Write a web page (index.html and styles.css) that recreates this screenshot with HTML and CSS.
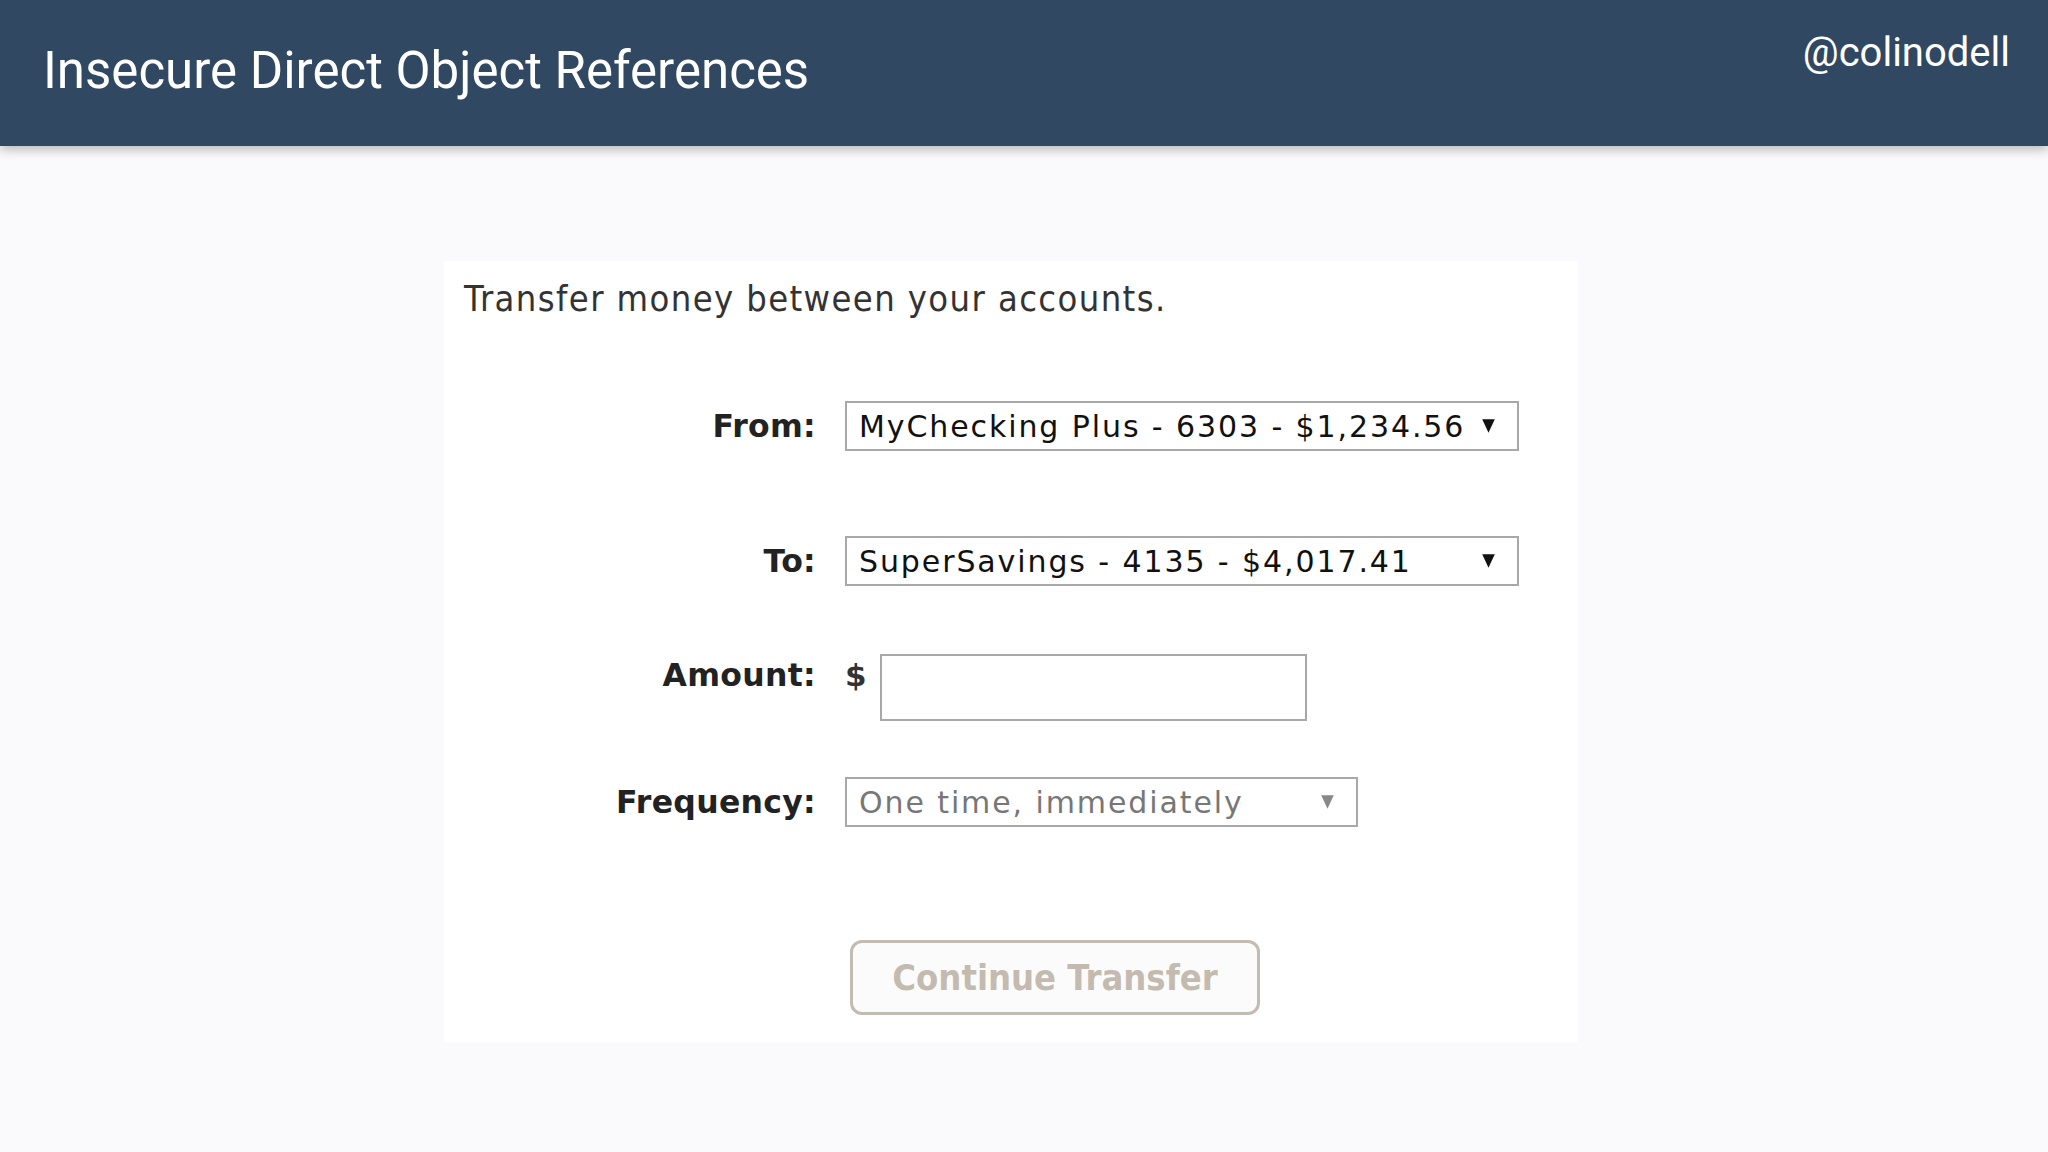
FILE: index.html
```html
<!DOCTYPE html>
<html lang="en">
<head>
  <meta charset="UTF-8">
  <title>Insecure Direct Object References</title>
  <link rel="stylesheet" href="styles.css">
</head>
<body>

  <header class="slide-header">
    <h1>Insecure Direct Object References</h1>
    <div class="handle">@colinodell</div>
  </header>

  <main class="panel">
    <p class="intro">Transfer money between your accounts.</p>

    <div class="row row-from">
      <label>From:</label>
      <div class="select select-wide">
        <span>MyChecking Plus - 6303 - $1,234.56</span>
        <svg class="caret" viewBox="0 0 12 14"><path d="M0.5 1 H11.5 L6 13 Z"/></svg>
      </div>
    </div>

    <div class="row row-to">
      <label>To:</label>
      <div class="select select-wide">
        <span>SuperSavings - 4135 - $4,017.41</span>
        <svg class="caret" viewBox="0 0 12 14"><path d="M0.5 1 H11.5 L6 13 Z"/></svg>
      </div>
    </div>

    <div class="row row-amount">
      <label>Amount:</label>
      <span class="dollar">$</span>
      <input class="amount" type="text">
    </div>

    <div class="row row-freq">
      <label>Frequency:</label>
      <div class="select select-freq">
        <span>One time, immediately</span>
        <svg class="caret" viewBox="0 0 12 14"><path d="M0.5 1 H11.5 L6 13 Z"/></svg>
      </div>
    </div>

    <div class="row row-submit">
      <label></label>
      <button class="btn" disabled>Continue Transfer</button>
    </div>
  </main>

</body>
</html>
```

FILE: styles.css
```css
body {
  margin: 0;
  background: #faf9fb;
  font-family: "DejaVu Sans Condensed", "DejaVu Sans", sans-serif;
  width: 2048px;
  height: 1152px;
  overflow: hidden;
}
.slide-header {
  height: 146px;
  background: #304862;
  box-shadow: 0 4px 10px rgba(0,0,0,0.25);
  display: flex;
  justify-content: space-between;
  align-items: flex-start;
  padding: 0 38px 0 43px;
  color: #fff;
  font-family: Roboto, sans-serif;
}
.slide-header h1 {
  margin: 0;
  padding-top: 38px;
  font-size: 51px;
  font-weight: 400;
  line-height: 66px;
}
.handle {
  padding-top: 25px;
  font-size: 40px;
  line-height: 56px;
}
.panel {
  display: block;
  width: 1094px;
  margin: 115px 0 0 444px;
  background: #fff;
  padding: 16px 20px 27px 20px;
}
.intro {
  margin: 0;
  font-size: 36px;
  line-height: 44px;
  letter-spacing: 1.4px;
  color: #333;
}
.row {
  display: flex;
  align-items: center;
}
.row label {
  width: 352px;
  margin-right: 29px;
  text-align: right;
  font-family: "DejaVu Sans", sans-serif;
  font-weight: bold;
  font-size: 31.5px;
  letter-spacing: 0.3px;
  line-height: 38px;
  color: #222;
}
.row-from { margin-top: 80px; }
.row-to { margin-top: 85px; }
.row-amount { margin-top: 68px; align-items: flex-start; }
.row-amount label { margin-top: 2px; }
.row-freq { margin-top: 56px; }
.row-submit { margin-top: 113px; }

.select {
  box-sizing: border-box;
  height: 50px;
  border: 2px solid #a8a8a8;
  background: #fff;
  display: flex;
  align-items: center;
  justify-content: space-between;
  padding: 0 21px 0 12px;
  font-family: "DejaVu Sans", sans-serif;
  font-size: 30px;
  letter-spacing: 1.9px;
  color: #111;
}
.select-wide { width: 674px; }
.select-freq { width: 513px; color: #777; }
.caret {
  width: 15px;
  height: 16px;
  fill: #111;
}
.select-freq .caret { fill: #888; }

.dollar {
  font-family: "DejaVu Sans", sans-serif;
  font-weight: bold;
  font-size: 31px;
  line-height: 38px;
  color: #333;
  width: 35px;
  margin-top: 2px;
}
.amount {
  box-sizing: border-box;
  width: 427px;
  height: 67px;
  border: 2px solid #a8a8a8;
  margin: 0;
  background: #fff;
}
.btn {
  box-sizing: border-box;
  margin-left: 5px;
  width: 410px;
  height: 75px;
  border: 3px solid #c2bcb2;
  border-radius: 12px;
  background: #fcfbfb;
  color: #c4bbb0;
  font-family: "DejaVu Sans Condensed", sans-serif;
  font-weight: bold;
  font-size: 36px;
}
```
